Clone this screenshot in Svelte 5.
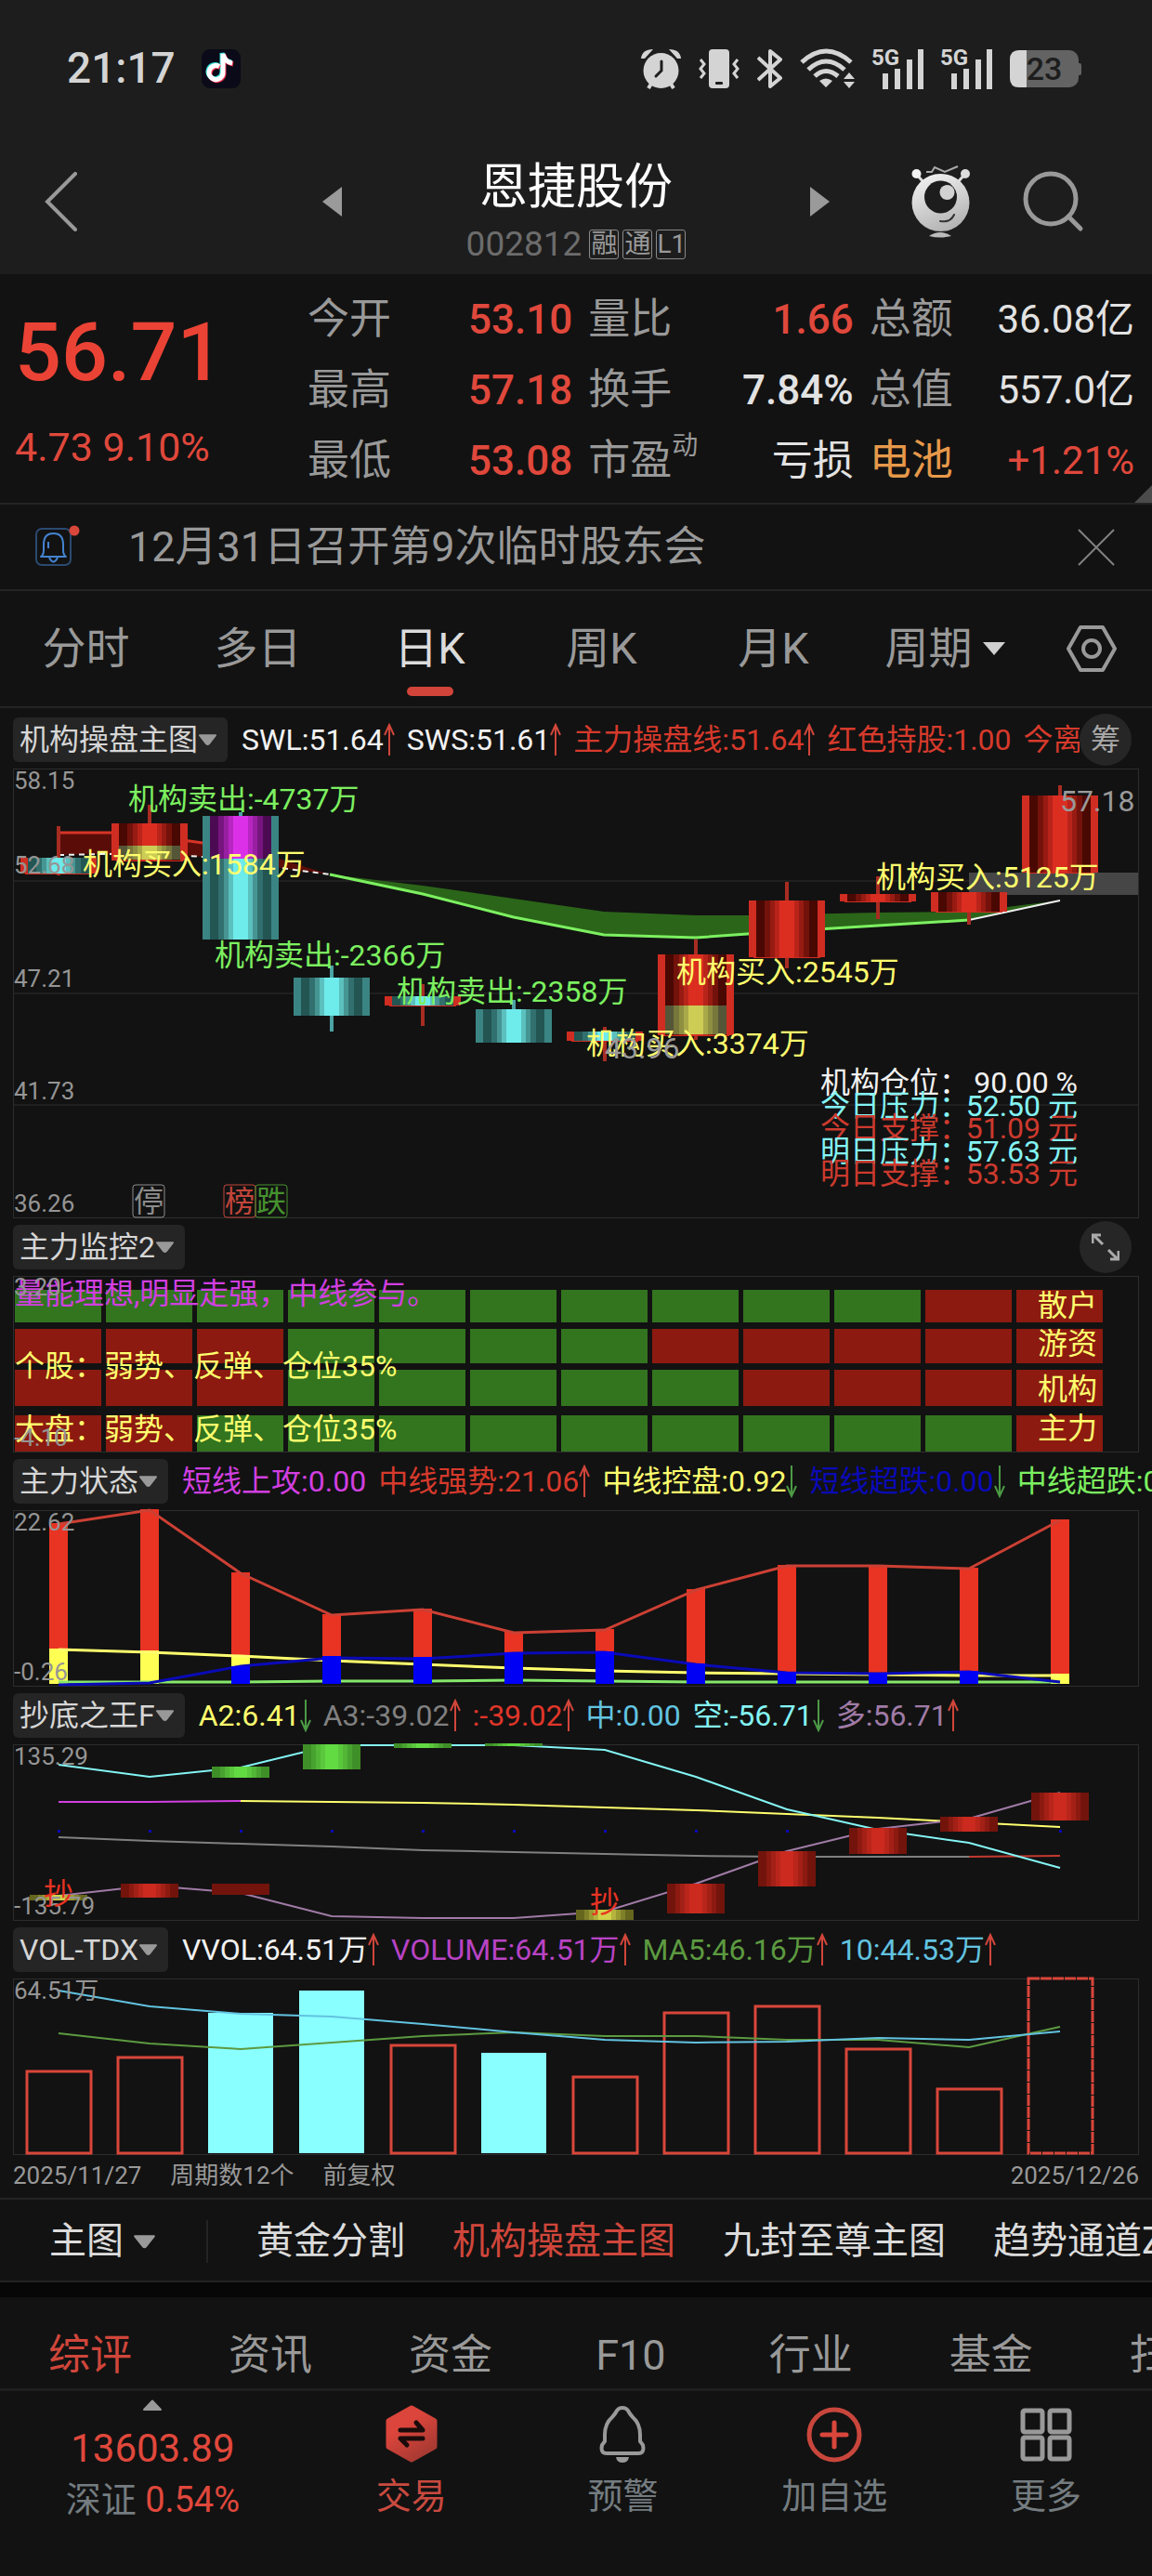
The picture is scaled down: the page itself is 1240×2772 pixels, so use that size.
<script lang="ts">
    type Quote = { label: string, value: string, tone: string, sup?: string, hot?: boolean };
    const quotes: Quote[] = [
        { label: "今开", value: "53.10", tone: "red" },
        { label: "量比", value: "1.66", tone: "red" },
        { label: "总额", value: "36.08亿", tone: "white" },
        { label: "最高", value: "57.18", tone: "red" },
        { label: "换手", value: "7.84%", tone: "white" },
        { label: "总值", value: "557.0亿", tone: "white" },
        { label: "最低", value: "53.08", tone: "red" },
        { label: "市盈", value: "亏损", tone: "white plain", sup: "动" },
        { label: "电池", value: "+1.21%", tone: "red", hot: true },
    ];

    const periods = ["分时", "多日", "日K", "周K", "月K"];
    let period = $state("日K");

    const indicators = ["黄金分割", "机构操盘主图", "九封至尊主图", "趋势通道Z"];
    let indicator = $state("机构操盘主图");

    const infoTabs = ["综评", "资讯", "资金", "F10", "行业", "基金", "扫雷"];
    let info = $state("综评");

    type Legend = { text: string, color: string, dir?: "up" | "down" };
    const mainLegend: Legend[] = [
        { text: "SWL:51.64", color: "#f2f2f2", dir: "up" },
        { text: "SWS:51.61", color: "#f2f2f2", dir: "up" },
        { text: "主力操盘线:51.64", color: "#d63a2c", dir: "up" },
        { text: "红色持股:1.00", color: "#d63a2c" },
        { text: "今离", color: "#d63a2c" },
    ];
    const stateLegend: Legend[] = [
        { text: "短线上攻:0.00", color: "#d13fe0" },
        { text: "中线强势:21.06", color: "#d63a2c", dir: "up" },
        { text: "中线控盘:0.92", color: "#ffff6e", dir: "down" },
        { text: "短线超跌:0.00", color: "#0a0ab8", dir: "down" },
        { text: "中线超跌:0.00", color: "#7cf060" },
    ];
    const bottomLegend: Legend[] = [
        { text: "A2:6.41", color: "#ffff6e", dir: "down" },
        { text: "A3:-39.02", color: "#808080", dir: "up" },
        { text: ":-39.02", color: "#e0362a", dir: "up" },
        { text: "中:0.00", color: "#62c3e0" },
        { text: "空:-56.71", color: "#84f4f4", dir: "down" },
        { text: "多:56.71", color: "#a07ba6", dir: "up" },
    ];
    const volLegend: Legend[] = [
        { text: "VVOL:64.51万", color: "#f2f2f2", dir: "up" },
        { text: "VOLUME:64.51万", color: "#b843c4", dir: "up" },
        { text: "MA5:46.16万", color: "#5c9a40", dir: "up" },
        { text: "10:44.53万", color: "#62c3e0", dir: "up" },
    ];

    // every chart has the same twelve columns
    const cx = (i: number) => 49 + 98 * i;
    const line = (ys: number[], from = 0) => ys.map((y, i) => `${cx(i + from)},${y}`).join(" ");

    // stepped shading of the bodies, dark rim to bright core
    const shades: Record<string, string[]> = {
        cyan: ["#235553", "#31706e", "#469593", "#5bc0be", "#6eebeb"],
        red: ["#4a0803", "#72120b", "#971b12", "#b9241a", "#db2e21"],
        magenta: ["#4c0a52", "#76157e", "#981fa2", "#b826c2", "#dc30e8"],
        olive: ["#555537", "#77773c", "#8f8f42", "#a9a94a", "#cdcd55"],
        brick: ["#72140c", "#8c1a11", "#a32017", "#b8251b", "#cc2a1f"],
        lime: ["#3f8f28", "#48a22f", "#52b636", "#5ac83c", "#62da42"],
        moss: ["#66661f", "#808029", "#9a9a33", "#b3b33d", "#d2d24a"],
    };
    const cuts = [0, 14, 22, 30, 38, 62, 70, 78, 86, 100];
    const stops = (c: string[]) => {
        const seq = [...c, ...c.slice(0, -1).reverse()];
        return seq.flatMap((color, i) => [{ at: cuts[i], color }, { at: cuts[i + 1], color }]);
    };

    type Candle = { hi: number, lo: number, top: number, end: number, fill: string, edge: string, part?: string, partTop?: number, partEnd?: number };
    const candles: Candle[] = [
        { hi: 62, lo: 115, top: 96, end: 113, fill: "cyan", edge: "red" },
        { hi: 39, lo: 99, top: 59, end: 99, fill: "red", edge: "red", part: "olive", partTop: 83, partEnd: 98 },
        { hi: 47, lo: 184, top: 51, end: 184, fill: "cyan", edge: "cyan", part: "magenta", partTop: 51, partEnd: 97 },
        { hi: 212, lo: 283, top: 225, end: 266, fill: "cyan", edge: "cyan" },
        { hi: 232, lo: 277, top: 245, end: 255, fill: "cyan", edge: "red" },
        { hi: 249, lo: 295, top: 259, end: 295, fill: "cyan", edge: "cyan" },
        { hi: 278, lo: 315, top: 283, end: 293, fill: "cyan", edge: "red" },
        { hi: 184, lo: 292, top: 200, end: 287, fill: "red", edge: "red", part: "olive", partTop: 255, partEnd: 286 },
        { hi: 122, lo: 215, top: 142, end: 203, fill: "red", edge: "red" },
        { hi: 116, lo: 162, top: 135, end: 143, fill: "red", edge: "red" },
        { hi: 133, lo: 168, top: 133, end: 154, fill: "red", edge: "red" },
        { hi: 18, lo: 112, top: 29, end: 112, fill: "red", edge: "red" },
    ];
    const edges: Record<string, string> = { red: "#cf2d22", cyan: "#3a8583" };
    const wicks: Record<string, string> = { red: "#a82c22", cyan: "#4ba3a3" };

    const notes = [
        { x: 124, y: 44, text: "机构卖出:-4737万", color: "#7cf060" },
        { x: 75, y: 114, text: "机构买入:1584万", color: "#ffff6e" },
        { x: 217, y: 212, text: "机构卖出:-2366万", color: "#7cf060" },
        { x: 413, y: 251, text: "机构卖出:-2358万", color: "#7cf060" },
        { x: 617, y: 307, text: "机构买入:3374万", color: "#ffff6e" },
        { x: 714, y: 230, text: "机构买入:2545万", color: "#ffff6e" },
        { x: 929, y: 128, text: "机构买入:5125万", color: "#ffff6e" },
    ];
    const scale = [
        { y: 22, text: "58.15" }, { y: 113, text: "52.68" }, { y: 235, text: "47.21" },
        { y: 356, text: "41.73" }, { y: 477, text: "36.26" },
    ];
    const levels = [
        { name: "机构仓位：", value: "90.00 %", color: "#f2f2f2" },
        { name: "今日压力：", value: "52.50 元", color: "#84f4f4" },
        { name: "今日支撑：", value: "51.09 元", color: "#cc3a2e" },
        { name: "明日压力：", value: "57.63 元", color: "#84f4f4" },
        { name: "明日支撑：", value: "53.53 元", color: "#cc3a2e" },
    ];
    const marks = [
        { x: 129, text: "停", color: "#8c8c8c" },
        { x: 227, text: "榜", color: "#c2453b" },
        { x: 261, text: "跌", color: "#46922f" },
    ];

    const heat = [
        { y: 15, h: 35, cells: "ggggggggggrr", name: "散户", ty: 43 },
        { y: 57, h: 37, cells: "rrrggggrrrrr", name: "游资", ty: 84 },
        { y: 101, h: 39, cells: "rrrgggggrrrr", name: "机构", ty: 133 },
        { y: 150, h: 39, cells: "rrgggggggggr", name: "主力", ty: 175 },
    ];

    const strength = [14, -1, 67, 112, 106, 131, 128, 85, 59, 59, 62, 10];
    const control = [149, 151, 156, 187, 187, 187, 187, 187, 187, 187, 187, 176];
    const oversold = [187, 187, 168, 157, 158, 153, 152, 165, 174, 175, 173, 187];

    const boxes = [
        { i: 0, y: 162, h: 6, fill: "moss" }, { i: 1, y: 150, h: 15, fill: "brick" },
        { i: 2, y: 24, h: 12, fill: "lime" }, { i: 3, y: 0, h: 27, fill: "lime" },
        { i: 4, y: -1, h: 5, fill: "lime" }, { i: 5, y: -1, h: 3, fill: "lime" },
        { i: 6, y: 178, h: 11, fill: "moss" }, { i: 7, y: 150, h: 32, fill: "brick" },
        { i: 8, y: 115, h: 38, fill: "brick" }, { i: 9, y: 90, h: 28, fill: "brick" },
        { i: 10, y: 78, h: 16, fill: "brick" }, { i: 11, y: 52, h: 30, fill: "brick" },
    ];

    const volumes = [100, 85, 37, 13, 72, 80, 106, 37, 30, 76, 119, 0];
    const falling = [2, 3, 5];
</script>

{#snippet caret()}
    <svg class="caret" viewBox="0 0 22 14" aria-hidden="true"><path d="M2 2H20L12.500 11.500Q11 13 9.500 11.500Z" fill="currentColor" stroke="currentColor" stroke-width="2" stroke-linejoin="round" /></svg>
{/snippet}

{#snippet head(title: string, legend: Legend[])}
    <button class="picker" aria-haspopup="menu">{title}{@render caret()}</button>
    <div class="legend">
        {#each legend as item}
            <span style="color: {item.color}">{item.text}{#if item.dir}<svg class="arrow {item.dir}" viewBox="0 0 12 36" aria-hidden="true"><path d="M6 35V2M1 13L6 2L11 13" fill="none" stroke="currentColor" stroke-width="2" /></svg>{/if}</span>
        {/each}
    </div>
{/snippet}

{#snippet signal()}
    <svg class="signal" width="55" height="44" viewBox="0 0 55 44" aria-label="5G">
        <text x="-1" y="18" class="net">5G</text>
        <path d="M14 30V41M27 25V41M40 15V41M52 4V41" stroke="#d4d4d4" stroke-width="6" stroke-linecap="square" />
    </svg>
{/snippet}

<svg class="defs" width="0" height="0" aria-hidden="true">
    <defs>
        {#each Object.entries(shades) as [name, colors]}
            <linearGradient id={name}>
                {#each stops(colors) as stop}
                    <stop offset="{stop.at}%" stop-color={stop.color} />
                {/each}
            </linearGradient>
        {/each}
    </defs>
</svg>

<div class="page">
    <div class="top">
        <div class="status">
            <span class="time">21:17</span>
            <svg width="42" height="42" viewBox="0 0 42 42" aria-hidden="true">
                <rect width="42" height="42" rx="9" fill="#0a0a18" />
                <g fill="none" stroke-width="5">
                    <path d="M19 18.500A7.500 7.500 0 1 0 23 25.500V5C24 11 28 14 33 15" stroke="#35e0dc" transform="translate(-1 -1)" />
                    <path d="M19 18.500A7.500 7.500 0 1 0 23 25.500V5C24 11 28 14 33 15" stroke="#f0334f" transform="translate(1 1)" />
                    <path d="M19 18.500A7.500 7.500 0 1 0 23 25.500V5C24 11 28 14 33 15" stroke="#fff" />
                </g>
            </svg>
            <div class="device">
                <svg width="43" height="44" viewBox="0 0 43 44" aria-hidden="true">
                    <circle cx="21.500" cy="24" r="19" fill="#d4d4d4" />
                    <path d="M0 11Q1 1 13 1L4 11ZM43 11Q42 1 30 1L39 11Z" fill="#d4d4d4" />
                    <path d="M11 38L8 43M32 38L35 43" stroke="#d4d4d4" stroke-width="4" />
                    <path d="M22 14V24L16 30" fill="none" stroke="#1d1d1d" stroke-width="3" stroke-linecap="round" />
                </svg>
                <svg width="44" height="44" viewBox="0 0 44 44" aria-hidden="true">
                    <rect x="11" y="1" width="22" height="42" rx="4" fill="#d4d4d4" />
                    <rect x="18" y="36" width="8" height="3" rx="1" fill="#1d1d1d" />
                    <path d="M2 12L6 17L2 22L6 27L2 32M42 12L38 17L42 22L38 27L42 32" fill="none" stroke="#d4d4d4" stroke-width="3" />
                </svg>
                <svg width="27" height="44" viewBox="0 0 27 44" aria-hidden="true">
                    <path d="M1 10L25 32L14 41V3L25 12L1 34" fill="none" stroke="#d4d4d4" stroke-width="4" stroke-linejoin="round" />
                </svg>
                <svg width="59" height="44" viewBox="0 0 59 44" aria-hidden="true">
                    <g fill="none" stroke="#d4d4d4" stroke-width="5">
                        <path d="M2 15Q28 -9 55 15" />
                        <path d="M9 23Q28 5 48 23" />
                        <path d="M16 30Q28 19 41 30" />
                    </g>
                    <path d="M21 35Q28 30 35 35L28 42ZM47 33L53 26L59 33ZM47 36H59L53 43Z" fill="#d4d4d4" />
                </svg>
                {@render signal()}
                {@render signal()}
                <svg width="77" height="44" viewBox="0 0 77 44" aria-label="23">
                    <rect x="0" y="2" width="74" height="40" rx="10" fill="#636363" />
                    <rect x="72" y="16" width="5" height="13" rx="2" fill="#636363" />
                    <path d="M10 2H18V42H10Q0 42 0 32V12Q0 2 10 2Z" fill="#d4d4d4" />
                    <text x="37" y="34" class="charge">23</text>
                </svg>
            </div>
        </div>
        <header>
            <div class="side left">
                <button aria-label="返回"><svg width="36" height="64" viewBox="0 0 36 64"><path d="M33 2L3 32L33 62" fill="none" stroke="#999" stroke-width="4" stroke-linecap="round" /></svg></button>
                <button aria-label="上一只"><svg width="22" height="34" viewBox="0 0 22 34"><path d="M22 1V33L1 17Z" fill="#9a9a9a" /></svg></button>
            </div>
            <div class="name">
                <h1>恩捷股份</h1>
                <p>002812 <span class="tag">融</span><span class="tag">通</span><span class="tag">L1</span></p>
            </div>
            <div class="side right">
                <button aria-label="下一只"><svg width="22" height="34" viewBox="0 0 22 34"><path d="M0 1V33L21 17Z" fill="#9a9a9a" /></svg></button>
                <div class="tools">
                    <button aria-label="助手">
                        <svg width="64" height="78" viewBox="0 0 64 78">
                            <defs><linearGradient id="robot" x1="0.3" x2="0.7" y1="0" y2="1"><stop offset="0" stop-color="#f0f0f0" /><stop offset="1" stop-color="#b0b0b0" /></linearGradient></defs>
                            <path d="M5 9L13 18M58 9L50 18" stroke="#ddd" stroke-width="3" />
                            <circle cx="5.500" cy="9" r="5" fill="#f2f2f2" /><circle cx="58" cy="9" r="5" fill="#ddd" />
                            <path d="M16 7H22L25 2L36 7L50 1" fill="none" stroke="#aaa" stroke-width="2" />
                            <circle cx="31.500" cy="40" r="31" fill="url(#robot)" />
                            <circle cx="31.500" cy="34" r="17.500" fill="#1d1d1d" />
                            <circle cx="38.500" cy="29" r="8" fill="#d2d2d2" />
                            <path d="M31 60Q42 62 46 53" fill="none" stroke="#333" stroke-width="2" stroke-linecap="round" />
                            <path d="M19 76Q31 68 43 76Q31 79 19 76Z" fill="#bbb" />
                        </svg>
                    </button>
                    <button aria-label="搜索"><svg width="66" height="66" viewBox="0 0 66 66"><circle cx="30" cy="30" r="27" fill="none" stroke="#999" stroke-width="5" /><path d="M49 49L62 62" stroke="#999" stroke-width="5" stroke-linecap="round" /></svg></button>
                </div>
            </div>
        </header>
    </div>

    <section class="quote">
        <div class="price">
            <strong>56.71</strong>
            <span>4.73 9.10%</span>
        </div>
        <dl>
            {#each quotes as q}
                <div>
                    <dt class:hot={q.hot}>{q.label}{#if q.sup}<sup>{q.sup}</sup>{/if}</dt>
                    <dd class={q.tone}>{q.value}</dd>
                </div>
            {/each}
        </dl>
        <svg class="corner" width="19" height="19" viewBox="0 0 19 19" aria-hidden="true"><path d="M19 0V19H0Z" fill="#4b4b4b" /></svg>
    </section>

    <div class="notice">
        <svg width="48" height="48" viewBox="0 0 48 48" aria-hidden="true">
            <rect x="1" y="7" width="37" height="39" rx="6" fill="none" stroke="#2b4a70" stroke-width="2" />
            <path d="M6 37Q9 35 9 30V24Q9 12 19.500 12T30 24V30Q30 35 33 37Z" fill="none" stroke="#4383d0" stroke-width="2" stroke-linejoin="round" />
            <path d="M15 38Q19.500 47 24 38M14 21V28" fill="none" stroke="#4383d0" stroke-width="2" />
            <circle cx="42" cy="9" r="5.500" fill="#d9463a" />
        </svg>
        <a href="#notice">12月31日召开第9次临时股东会</a>
        <button aria-label="关闭"><svg width="40" height="40" viewBox="0 0 40 40"><path d="M1 1L39 39M39 1L1 39" stroke="#808080" stroke-width="2" /></svg></button>
    </div>

    <nav class="periods">
        {#each periods as p}
            <button class:active={p === period} onclick={() => (period = p)}>{p}</button>
        {/each}
        <button class="more-period" aria-haspopup="menu">周期<svg width="26" height="14" viewBox="0 0 26 14" aria-hidden="true"><path d="M1 0H25L13 14Z" fill="#d0d0d0" /></svg></button>
        <button aria-label="设置">
            <svg width="54" height="50" viewBox="0 0 54 50"><path d="M15 2H39L52 25L39 48H15L2 25Z" fill="none" stroke="#999" stroke-width="4" stroke-linejoin="round" /><circle cx="27" cy="25" r="9" fill="none" stroke="#999" stroke-width="4" /></svg>
        </button>
    </nav>

    <main>
        <section>
            <div class="head">
                {@render head("机构操盘主图", mainLegend)}
                <button class="round">筹</button>
            </div>
            <svg class="chart" viewBox="0 0 1212 484">
                <path d="M0 121H1211M0 242H1211M0 362H1211" class="grid" />
                <rect x="0.500" y="0.500" width="1211" height="483" class="frame" />
                <rect x="1029" y="112" width="182" height="24" fill="#464646" />

                <path d="M49 69H106L147 72L204 80L286 97L341 114L288 107L204 95L147 91L49 93Z" fill="#5a0d08" />
                <path d="M49 69H106L147 72L204 80L286 97" fill="none" stroke="#d63427" stroke-width="3" />
                <path d="M341 114L441 126L539 140L636 154L735 158H792L931 155L1029 154L1127 142L1029 163L931 169L792 178L735 182L636 179L539 160L441 135Z" fill="#2b6519" />
                <path d="M341 114L441 135L539 160L636 179L735 182L833 175L931 169L1029 163" fill="none" stroke="#7cf060" stroke-width="3" />
                <path d="M49 93L147 91L204 95L288 107L341 114" fill="none" stroke="#f0f0f0" stroke-width="2" stroke-dasharray="6 5" />
                <path d="M1029 163L1127 142" stroke="#f0f0f0" stroke-width="2" />

                {#each candles as c, i}
                    <rect x={cx(i) - 2} y={c.hi} width="4" height={c.lo - c.hi} fill={wicks[c.edge]} />
                    <rect x={cx(i) - 41} y={c.top} width="82" height={c.end - c.top} fill={edges[c.edge]} />
                    <rect x={cx(i) - 33} y={c.top} width="66" height={c.end - c.top} fill="url(#{c.fill})" />
                    {#if c.part && c.partTop !== undefined && c.partEnd !== undefined}
                        <rect x={cx(i) - 33} y={c.partTop} width="66" height={c.partEnd - c.partTop} fill="url(#{c.part})" />
                    {/if}
                    {#if c.edge === "red"}
                        <rect x={cx(i) - 36} y={c.end} width="72" height="1" fill="#cf2d22" />
                    {/if}
                {/each}

                {#each scale as s}
                    <text x="1" y={s.y} class="axis">{s.text}</text>
                {/each}
                {#each notes as n}
                    <text x={n.x} y={n.y} fill={n.color}>{n.text}</text>
                {/each}
                <text x="637" y="312" fill="#9a9a9a">43.96</text>
                <text x="1127" y="46" fill="#9a9a9a">57.18</text>
                {#each levels as l, i}
                    <text x="869" y={349 + Math.round(i * 24.5)} fill={l.color}>{l.name}</text>
                    <text x="1146" y={349 + Math.round(i * 24.5)} fill={l.color} text-anchor="end">{l.value}</text>
                {/each}
                {#each marks as m}
                    <rect x={m.x} y="448" width="34" height="35" rx="3" fill="none" stroke={m.color} />
                    <text x={m.x + 17} y="477" fill={m.color} text-anchor="middle">{m.text}</text>
                {/each}
            </svg>
        </section>

        <section>
            <div class="head">
                {@render head("主力监控2", [])}
                <button class="round" aria-label="展开"><svg width="30" height="30" viewBox="0 0 30 30"><path d="M1 11V2H10M2 2L12 12M29 19V28H20M28 28L18 18" fill="none" stroke="#aaa" stroke-width="3" /></svg></button>
            </div>
            <svg class="chart" viewBox="0 0 1212 190">
                <rect x="0.500" y="0.500" width="1211" height="189" class="frame" />
                {#each heat as row}
                    {#each row.cells as cell, i}
                        <rect x={2 + 98 * i} y={row.y} width="93" height={row.h} fill={cell === "g" ? "#33741f" : "#8c1a10"} />
                    {/each}
                    <text x="1167" y={row.ty} fill="#ffff6e" text-anchor="end">{row.name}</text>
                {/each}
                <text x="2" y="30" fill="#d13fe0">量能理想,明显走强，中线参与。</text>
                <text x="2" y="108" fill="#ffff6e">个股：弱势、反弹、仓位35%</text>
                <text x="2" y="176" fill="#ffff6e">大盘：弱势、反弹、仓位35%</text>
                <text x="1" y="21" class="axis">3.20</text>
                <text x="1" y="183" class="axis">-4.10</text>
            </svg>
        </section>

        <section>
            <div class="head">{@render head("主力状态", stateLegend)}</div>
            <svg class="chart" viewBox="0 0 1212 190">
                <rect x="0.500" y="0.500" width="1211" height="189" class="frame" />
                {#each strength as top, i}
                    <rect x={cx(i) - 10} y={top} width="20" height={187 - top} fill="#e93323" />
                    <rect x={cx(i) - 10} y={control[i]} width="20" height={187 - control[i]} fill="#ffff54" />
                {/each}
                <polyline points={line(strength.map((y) => y + 1))} class="plot wide" stroke="#cc4034" />
                <polyline points={line([185, 185, 185, 184, 184, 183, 184, 185, 185, 185, 185, 185])} class="plot wide" stroke="#86e86c" />
                <polyline points={line([150, 153, 157, 162, 166, 170, 173, 175, 176, 177, 178, 178])} class="plot wide" stroke="#ffff6e" />
                <polyline points={line([188, 186, 168, 159, 160, 154, 153, 166, 175, 176, 174, 185])} class="plot wide" stroke="#0a0ab8" />
                {#each oversold as top, i}
                    <rect x={cx(i) - 10} y={top} width="20" height={187 - top} fill="#0000f5" />
                {/each}
                <text x="1" y="22" class="axis">22.62</text>
                <text x="1" y="183" class="axis">-0.26</text>
            </svg>
        </section>

        <section>
            <div class="head">{@render head("抄底之王F", bottomLegend)}</div>
            <svg class="chart" viewBox="0 0 1212 190">
                <rect x="0.500" y="0.500" width="1211" height="189" class="frame" />
                <polyline points={line([100, 104, 107, 110, 114, 116, 118, 120, 121, 121, 121])} class="plot" stroke="#808080" />
                <polyline points={line([121, 120], 10)} class="plot" stroke="#c23a30" />
                <polyline points={line([61, 62, 63, 65, 68, 71, 75, 79, 84, 89], 2)} class="plot" stroke="#ffff6e" />
                <polyline points={line([62, 62, 61], 0)} class="plot" stroke="#d13fe0" />
                <polyline points={line([22, 35, 25, 1, 1, 1, 6, 35, 70, 92, 106, 133])} class="plot" stroke="#84f4f4" />
                <polyline points={line([163, 152, 160, 185, 187, 187, 180, 150, 115, 91, 80, 52])} class="plot" stroke="#a07ba6" />
                {#each volumes as _, i}
                    {#if i !== 9 && i !== 10}<rect x={cx(i) - 1} y="92" width="3" height="3" fill="#0a0ab8" />{/if}
                {/each}
                {#each boxes as b}
                    <rect x={cx(b.i) - 31} y={b.y} width="62" height={b.h} fill="url(#{b.fill})" />
                {/each}
                <rect x={cx(2) - 31} y="150" width="62" height="12" fill="#72140c" />
                <text x="1" y="22" class="axis">135.29</text>
                <text x="1" y="183" class="axis">-135.79</text>
                <text x={cx(0)} y="172" fill="#e93323" text-anchor="middle">抄</text>
                <text x={cx(6)} y="181" fill="#e93323" text-anchor="middle">抄</text>
            </svg>
        </section>

        <section>
            <div class="head">{@render head("VOL-TDX", volLegend)}</div>
            <svg class="chart" viewBox="0 0 1212 190">
                <rect x="0.500" y="0.500" width="1211" height="189" class="frame" />
                {#each volumes as top, i}
                    {#if falling.includes(i)}
                        <rect x={cx(i) - 35} y={top} width="70" height={188 - top} fill="#8affff" />
                    {:else}
                        <rect x={cx(i) - 34} y={top} width="69" height={188 - top} fill="none" stroke="#d9463a" stroke-width="3" stroke-dasharray={i === 11 ? "12 1" : "none"} />
                    {/if}
                {/each}
                <polyline points={line([59, 70, 76, 69, 62, 58, 62, 62, 66, 66, 74, 52])} class="plot" stroke="#5c9a40" />
                <polyline points={line([13, 30, 38, 41, 49, 58, 66, 69, 68, 64, 66, 57])} class="plot" stroke="#62c3e0" />
                <text x="1" y="22" class="axis">64.51万</text>
            </svg>
        </section>

        <div class="dates">
            <span>2025/11/27</span><span>周期数12个</span><span>前复权</span>
            <span class="end">2025/12/26</span>
        </div>
    </main>

    <nav class="indicators">
        <button class="kind" aria-haspopup="menu">主图{@render caret()}</button>
        <div class="strip">
            {#each indicators as item}
                <button class:active={item === indicator} onclick={() => (indicator = item)}>{item}</button>
            {/each}
        </div>
    </nav>

    <nav class="info">
        {#each infoTabs as tab}
            <button class:active={tab === info} onclick={() => (info = tab)}>{tab}</button>
        {/each}
    </nav>

    <footer>
        <a class="index" href="#index">
            <svg width="22" height="13" viewBox="0 0 22 13" aria-hidden="true"><path d="M11 1.500L20 11H2Z" fill="#999" stroke="#999" stroke-width="2" stroke-linejoin="round" /></svg>
            <b>13603.89</b>
            <span>深证 <em>0.54%</em></span>
        </a>
        <a class="trade" href="#trade">
            <svg width="56" height="62" viewBox="0 0 56 62" aria-hidden="true">
                <defs><linearGradient id="hex" x2="0.6" y2="1"><stop offset="0.4" stop-color="#dc453b" /><stop offset="1" stop-color="#a83a33" /></linearGradient></defs>
                <path d="M28 3L53 17V45L28 59L3 45V17Z" fill="url(#hex)" stroke="url(#hex)" stroke-width="5" stroke-linejoin="round" />
                <path d="M16 27H40L33 19M40 36H16L23 43" fill="none" stroke="#1b0c0b" stroke-width="5" stroke-linecap="round" stroke-linejoin="round" />
            </svg>
            交易
        </a>
        <a href="#alert">
            <svg width="52" height="62" viewBox="0 0 52 62" aria-hidden="true">
                <path d="M20 6Q22 3 26 3T32 6Q34 10 37 13Q45 20 45 32V39L48 43Q50 52 43 52H9Q2 52 4 43L7 39V32Q7 20 15 13Q18 10 20 6Z" fill="none" stroke="#999" stroke-width="4" />
                <path d="M19 56H33Q32 62 26 62T19 56Z" fill="#999" />
            </svg>
            预警
        </a>
        <a href="#favorite">
            <svg width="60" height="62" viewBox="0 0 60 62" aria-hidden="true">
                <circle cx="30" cy="32" r="27" fill="none" stroke="#c9463c" stroke-width="5" />
                <path d="M17 32H43M30 19V45" stroke="#d9463c" stroke-width="5" stroke-linecap="round" />
            </svg>
            加自选
        </a>
        <a href="#more">
            <svg width="56" height="62" viewBox="0 0 56 62" aria-hidden="true">
                <g fill="none" stroke="#999" stroke-width="5">
                    <rect x="3" y="6" width="21" height="23" rx="2" /><rect x="32" y="6" width="21" height="23" rx="2" />
                    <rect x="3" y="35" width="21" height="23" rx="2" /><rect x="32" y="35" width="21" height="23" rx="2" />
                </g>
            </svg>
            更多
        </a>
    </footer>
</div>

<style>
:global(body) {
    background: #121212;
}

.page {
    min-height: 100vh;
    overflow: hidden;
    background: #121212;
    color: #999;
    font-family: Roboto, "Noto Sans CJK SC", sans-serif;
    line-height: 1.2;
}

.defs {
    position: absolute;
}

svg {
    flex: none;
    display: block;
}

button {
    padding: 0;
    border: 0;
    background: none;
    color: inherit;
    font: inherit;
    white-space: nowrap;
    cursor: pointer;
}

a {
    color: inherit;
    text-decoration: none;
}

.red {
    color: #e0483c;
}

.white {
    color: #e2e2e2;
}

/* status bar and title */

.top {
    background: #1d1d1d;
}

.status {
    display: flex;
    align-items: center;
    gap: 28px;
    height: 148px;
    padding: 0 76px 0 72px;
}

.time {
    color: #d4d4d4;
    font-size: 46px;
    font-weight: 500;
}

.device {
    display: flex;
    gap: 19px;
    margin-left: auto;
}

.signal {
    overflow: visible;
}

.net {
    fill: #d4d4d4;
    font-size: 24px;
    font-weight: 700;
}

.charge {
    fill: #1d1d1d;
    font-size: 34px;
    font-weight: 500;
    text-anchor: middle;
}

header {
    display: grid;
    grid-template-columns: 368fr 504fr 368fr;
    align-items: center;
    height: 147px;
    padding-bottom: 9px;
    box-sizing: border-box;
}

.side {
    display: flex;
    align-items: center;
    justify-content: space-between;
}

.left {
    padding-left: 48px;
}

.right {
    padding-right: 73px;
}

.tools {
    display: flex;
    align-items: center;
    gap: 56px;
}

.name {
    padding-top: 22px;
    text-align: center;
}

h1 {
    margin: 0;
    color: #fff;
    font-size: 52px;
    font-weight: 400;
    line-height: 62px;
}

.name p {
    display: flex;
    align-items: center;
    justify-content: center;
    gap: 4px;
    margin: 8px 0 0;
    color: #6c6c6c;
    font-size: 37px;
    line-height: 44px;
}

.tag {
    width: 30px;
    height: 30px;
    border: 1px solid #8a8a8a;
    border-radius: 3px;
    color: #999;
    font-size: 28px;
    line-height: 30px;
}

.tag:first-child {
    margin-left: 4px;
}

/* quote */

.quote {
    position: relative;
    display: grid;
    grid-template-columns: 315fr 890fr;
    padding: 11px 19px 7px 16px;
    border-bottom: 2px solid #242424;
}

.price {
    display: flex;
    flex-direction: column;
    gap: 32px;
    padding-top: 28px;
    color: #e0483c;
    font-size: 43px;
    line-height: 50px;
}

.price strong {
    color: #ea4335;
    font-size: 88px;
    font-weight: 500;
    line-height: 90px;
}

dl {
    display: grid;
    grid-template-columns: repeat(3, 1fr);
    gap: 0 17px;
    margin: 0;
}

dl div {
    display: flex;
    align-items: center;
    justify-content: space-between;
    height: 76px;
}

dt {
    font-size: 45px;
}

dt.hot {
    color: #e6994a;
}

sup {
    font-size: 28px;
    line-height: 0;
    vertical-align: 22px;
}

dd {
    margin: 0;
    font-size: 44px;
    font-weight: 500;
}

dd.plain {
    font-weight: 400;
}

dl div:nth-child(3n) dd {
    font-size: 42px;
    font-weight: 400;
}

.corner {
    position: absolute;
    right: 0;
    bottom: 0;
}

.notice {
    display: flex;
    align-items: center;
    height: 91px;
    padding: 0 40px 0 38px;
    border-bottom: 2px solid #242424;
    font-size: 45px;
}

.notice svg {
    margin-top: -6px;
}

.notice a {
    flex: 1;
    padding-left: 52px;
}

.notice button svg {
    margin: 0;
}

.periods {
    display: grid;
    grid-template-columns: repeat(6, 185fr) 130fr;
    height: 124px;
    border-bottom: 2px solid #242424;
    font-size: 47px;
}

.periods button {
    position: relative;
    display: flex;
    align-items: center;
    justify-content: center;
    gap: 10px;
}

.periods .active {
    color: #dcdcdc;
}

.periods .active::after {
    content: "";
    position: absolute;
    left: calc(50% - 25px);
    bottom: 11px;
    width: 50px;
    height: 10px;
    border-radius: 5px;
    background: #d2443a;
}

/* charts */

main {
    padding: 3px 14px 0;
    border-bottom: 2px solid #242424;
}

.head {
    display: flex;
    align-items: center;
    height: 62px;
    margin-right: -14px;
    font-size: 32px;
}

.picker {
    display: flex;
    align-items: center;
    flex: none;
    height: 48px;
    padding: 0 11px 0 7px;
    border-radius: 6px;
    background: #252525;
    color: #d6d6d6;
}

.caret {
    width: 21px;
    height: 14px;
    color: #999;
}

.legend {
    display: flex;
    flex: 1;
    min-width: 0;
    gap: 13px;
    overflow: hidden;
    padding-left: 15px;
    white-space: nowrap;
}

.legend span {
    display: flex;
    align-items: center;
}

.arrow {
    width: 12px;
    height: 36px;
    color: #d0463b;
}

.arrow.down {
    transform: rotate(180deg);
    color: #4c9a45;
}

.round {
    display: grid;
    place-items: center;
    flex: none;
    width: 56px;
    height: 56px;
    margin-right: 22px;
    border-radius: 50%;
    background: #262626;
    color: #a8a8a8;
}

.chart {
    width: 100%;
    height: auto;
    overflow: visible;
    font-size: 32px;
}

.frame,
.grid {
    fill: none;
    stroke: #2d2d2d;
}

.axis {
    fill: #959595;
    font-size: 26px;
}

.plot {
    fill: none;
    stroke-width: 2;
}

.wide {
    stroke-width: 3;
}

.dates {
    display: flex;
    align-items: center;
    gap: 31px;
    height: 46px;
    font-size: 26px;
}

.end {
    margin-left: auto;
}

.indicators {
    display: flex;
    align-items: center;
    height: 84px;
    padding-top: 3px;
    border-bottom: 2px solid #242424;
    color: #dcdcdc;
    font-size: 40px;
}

.kind {
    display: flex;
    align-items: center;
    flex: none;
    gap: 10px;
    height: 46px;
    padding: 0 54px 0 53px;
    border-right: 2px solid #242424;
}

.kind .caret {
    width: 25px;
    height: 16px;
}

.strip {
    display: flex;
    gap: 51px;
    overflow: hidden;
    padding-left: 52px;
}

.indicators .active,
.info .active {
    color: #d0463b;
}

.info {
    display: grid;
    grid-template-columns: repeat(7, 1fr);
    width: 109.5%;
    height: 101px;
    margin-top: 16px;
    padding-top: 28px;
    box-sizing: border-box;
    border-bottom: 3px solid #1f1f1f;
    box-shadow: 0 -16px #070707;
    font-size: 45px;
}

/* bottom bar */

footer {
    display: grid;
    grid-template-columns: 329fr repeat(4, 228fr);
    color: #747c80;
    font-size: 38px;
}

footer a {
    display: flex;
    flex-direction: column;
    align-items: center;
    gap: 13px;
    padding-top: 15px;
    line-height: 46px;
}

footer .index {
    gap: 9px;
    padding-top: 9px;
}

.index b {
    margin-top: 8px;
    color: #e0483c;
    font-size: 42px;
    font-weight: 400;
}

.index em {
    color: #e0483c;
    font-style: normal;
}

footer .trade {
    color: #c94a40;
}
</style>
